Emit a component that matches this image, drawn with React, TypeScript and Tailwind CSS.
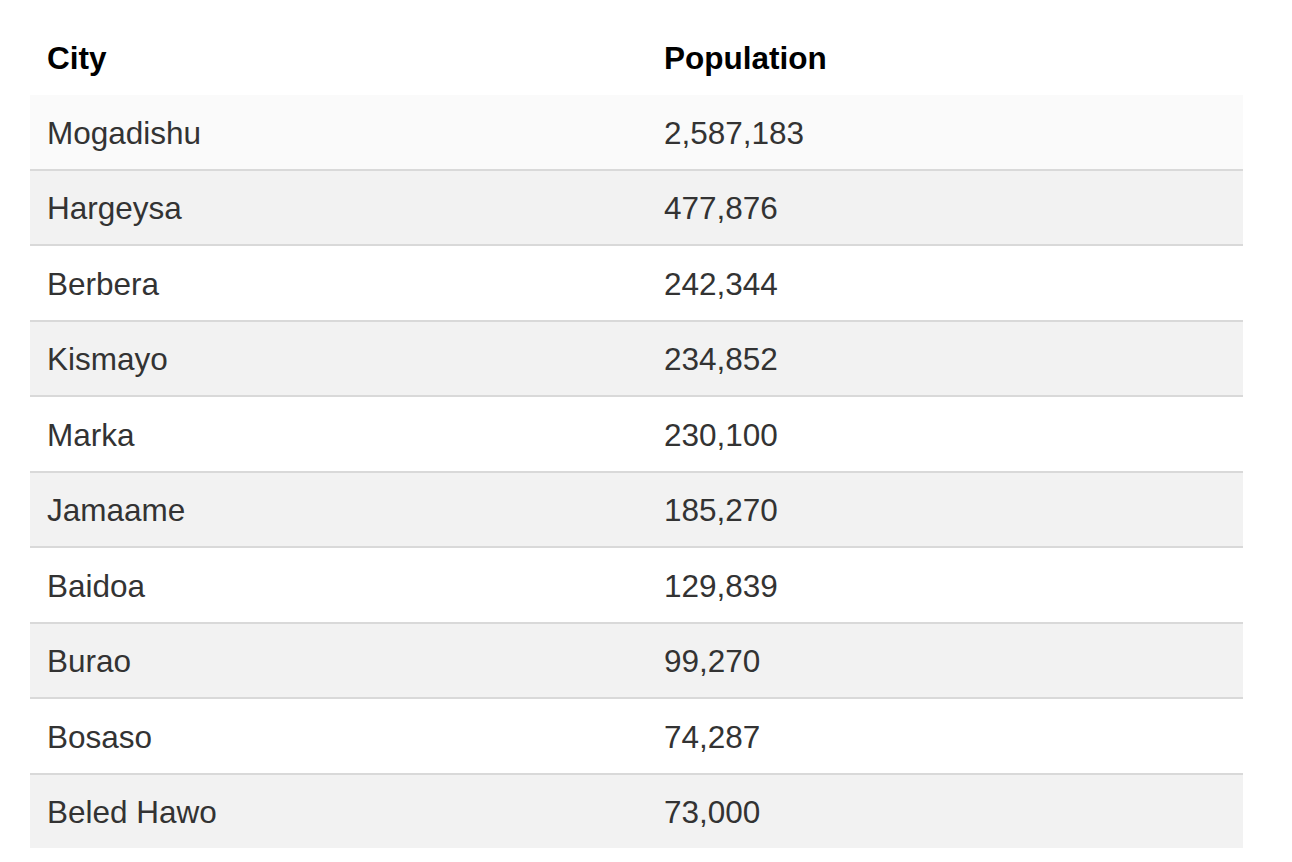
const rows: [string, string][] = [
  ["Mogadishu", "2,587,183"],
  ["Hargeysa", "477,876"],
  ["Berbera", "242,344"],
  ["Kismayo", "234,852"],
  ["Marka", "230,100"],
  ["Jamaame", "185,270"],
  ["Baidoa", "129,839"],
  ["Burao", "99,270"],
  ["Bosaso", "74,287"],
  ["Beled Hawo", "73,000"],
];

const rowBg = (i: number) => {
  if (i === 0) return "bg-[#fafafa]";
  return i % 2 === 1 ? "bg-[#f2f2f2]" : "bg-white";
};

const App = () => {
  return (
    <div className="min-h-screen bg-white px-[30px] pt-[30px] font-['Liberation_Sans',Arial,sans-serif] text-[31.5px]">
      <div className="w-[1213px]">
        <div className="flex h-[65px] items-center pb-[8px] font-bold text-black">
          <div className="w-[617px] pl-[17px]">City</div>
          <div className="flex-1 pl-[17px]">Population</div>
        </div>

        {rows.map(([city, pop], i) => (
          <div
            key={city}
            className={`flex items-center pt-[3px] text-[#333] ${rowBg(i)} ${
              i < rows.length - 1
                ? "h-[75.5px] border-b-2 border-[#d9d9d9]"
                : "h-[73.5px]"
            }`}
          >
            <div className="w-[617px] pl-[17px]">{city}</div>
            <div className="flex-1 pl-[17px]">{pop}</div>
          </div>
        ))}
      </div>
    </div>
  );
};

export default App;
